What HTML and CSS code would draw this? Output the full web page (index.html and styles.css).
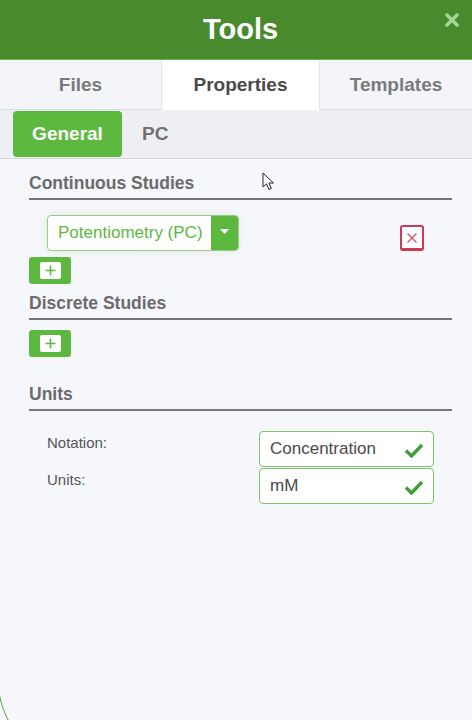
FILE: index.html
```html
<!DOCTYPE html>
<html>
<head>
<meta charset="utf-8">
<link rel="stylesheet" href="styles.css">
</head>
<body>
<div class="panel">
  <header class="hdr">
    <h1 class="title">Tools</h1>
    <span class="close" aria-label="close">
      <svg width="14" height="14" viewBox="0 0 14 14"><path d="M2 2L12 12M12 2L2 12" stroke="#a6d697" stroke-width="3.4" stroke-linecap="round"/></svg>
    </span>
  </header>
  <nav class="tabs">
    <div class="tab">Files</div>
    <div class="tab active">Properties</div>
    <div class="tab">Templates</div>
  </nav>
  <div class="subtabs">
    <div class="subtab on">General</div>
    <div class="subtab">PC</div>
  </div>
  <main class="content">
    <h2 class="sec">Continuous Studies</h2>
    <div class="studyrow">
      <div class="dropdown">
        <span class="dd-text">Potentiometry (PC)</span>
        <span class="dd-btn"><svg width="9" height="5" viewBox="0 0 9 5"><path d="M0 0H9L4.5 5Z" fill="#fff"/></svg></span>
      </div>
      <span class="del"><svg width="12" height="12" viewBox="0 0 12 12"><path d="M1.5 1.5L10.5 10.5M10.5 1.5L1.5 10.5" stroke="#d8485f" stroke-width="1.3"/></svg></span>
    </div>
    <div class="add"><span class="add-in"><svg width="11" height="11" viewBox="0 0 11 11"><path d="M5.5 0.5V10.5M0.5 5.5H10.5" stroke="#5cb83f" stroke-width="1.6"/></svg></span></div>

    <h2 class="sec sec2">Discrete Studies</h2>
    <div class="add add2"><span class="add-in"><svg width="11" height="11" viewBox="0 0 11 11"><path d="M5.5 0.5V10.5M0.5 5.5H10.5" stroke="#5cb83f" stroke-width="1.6"/></svg></span></div>

    <h2 class="sec sec3">Units</h2>
    <div class="form">
      <label class="lbl">Notation:</label>
      <div class="field"><span>Concentration</span><svg class="chk" width="20" height="16" viewBox="0 0 20 16"><path d="M2 8.5L7.5 14L18 3" fill="none" stroke="#3f9f3a" stroke-width="3.4"/></svg></div>
      <label class="lbl">Units:</label>
      <div class="field"><span>mM</span><svg class="chk" width="20" height="16" viewBox="0 0 20 16"><path d="M2 8.5L7.5 14L18 3" fill="none" stroke="#3f9f3a" stroke-width="3.4"/></svg></div>
    </div>
  </main>
  <svg class="cursor" width="14" height="20" viewBox="0 0 14 20"><path d="M1 1V15L4.5 11.8L7 17.5L9.3 16.5L6.9 11H11.5Z" fill="#fff" stroke="#222" stroke-width="1" stroke-linejoin="round"/></svg>
</div>
</body>
</html>
```
FILE: styles.css
```css
html, body {
  margin: 0;
  padding: 0;
  overflow: hidden;
  background: #f6f7fa;
}
body {
  font-family: "Liberation Sans", Arial, sans-serif;
  width: 472px;
  height: 720px;
}
.panel {
  position: relative;
  width: 472px;
  height: 720px;
  background: #f6f7fa;
  overflow: hidden;
}
.panel::after {
  content: "";
  position: absolute;
  left: -2px;
  bottom: -42px;
  width: 200px;
  height: 200px;
  border-left: 1px solid #5aa83f;
  border-bottom: 1px solid #5aa83f;
  border-bottom-left-radius: 80px;
  pointer-events: none;
}
.hdr {
  height: 59px;
  background: #498a2e;
  border-bottom: 1px solid #6fb554;
  display: flex;
  align-items: center;
  justify-content: center;
  position: relative;
  padding-left: 9px;
}
.title {
  margin: 0;
  color: #fff;
  font-size: 29px;
  font-weight: bold;
  line-height: 1;
}
.close {
  position: absolute;
  right: 13px;
  top: 13px;
  width: 14px;
  height: 14px;
  display: flex;
}
.tabs {
  display: grid;
  grid-template-columns: 161px 159px 1fr;
  height: 49px;
  background: #f4f5f8;
  border-bottom: 1px solid #dcdde0;
}
.tab {
  display: flex;
  align-items: center;
  justify-content: center;
  font-size: 19px;
  font-weight: bold;
  color: #7a7a7c;
}
.tab.active {
  background: #fff;
  color: #4a4a4a;
  border-left: 1px solid #e2e3e6;
  border-right: 1px solid #e2e3e6;
  margin-bottom: -1px;
}
.subtabs {
  height: 48px;
  background: #eeeff2;
  border-bottom: 1px solid #d5d6d9;
  display: flex;
  align-items: center;
  padding-left: 13px;
}
.subtab {
  font-size: 19px;
  font-weight: bold;
  color: #707072;
  padding: 0 0 0 20px;
}
.subtab.on {
  background: #5cb83f;
  color: #fff;
  width: 109px;
  height: 46px;
  box-sizing: border-box;
  border-radius: 4px;
  display: flex;
  align-items: center;
  justify-content: center;
  padding: 0;
}
.content {
  padding: 0 20px 0 29px;
}
.sec {
  margin: 12px 0 0;
  font-size: 17.5px;
  line-height: 24px;
  font-weight: bold;
  color: #6b6b6d;
  padding-bottom: 3px;
  border-bottom: 2px solid #77777a;
}
.sec2 { margin-top: 7px; }
.sec3 { margin-top: 25px; }
.studyrow {
  display: flex;
  justify-content: space-between;
  align-items: flex-end;
  margin-top: 15px;
  padding-left: 18px;
  padding-right: 28px;
}
.dropdown {
  display: flex;
  width: 192px;
  height: 36px;
  box-sizing: border-box;
  border: 1px solid #93d07d;
  border-radius: 4px;
  background: #fff;
  overflow: hidden;
  box-shadow: 0 0 10px rgba(0,0,0,0.07);
}
.dd-text {
  flex: 1;
  display: flex;
  align-items: center;
  padding-left: 10px;
  font-size: 17px;
  color: #5cb83f;
}
.dd-btn {
  width: 27px;
  background: #5cb83f;
  display: flex;
  align-items: center;
  justify-content: center;
  padding-bottom: 4px;
  box-sizing: border-box;
}
.del {
  width: 24px;
  height: 26px;
  box-sizing: border-box;
  border: 2px solid #cf3853;
  border-bottom-width: 3px;
  border-radius: 3px;
  background: #fff;
  display: flex;
  align-items: center;
  justify-content: center;
}
.add {
  margin-top: 6px;
  width: 42px;
  height: 27px;
  background: #5cb83f;
  border-radius: 3px;
  display: flex;
  align-items: center;
  justify-content: center;
}
.add2 { margin-top: 10px; }
.add-in {
  width: 21px;
  height: 17px;
  background: #fff;
  border-radius: 2px;
  display: flex;
  align-items: center;
  justify-content: center;
}
.form {
  margin-top: 20px;
  padding-left: 18px;
  display: grid;
  grid-template-columns: 212px 175px;
  grid-auto-rows: 37px;
}
.lbl {
  font-size: 15px;
  color: #555557;
  padding-top: 3px;
}
.field {
  height: 36px;
  box-sizing: border-box;
  border: 1px solid #7cc466;
  border-radius: 4px;
  background: #fff;
  display: flex;
  align-items: center;
  justify-content: space-between;
  padding: 0 9px 0 10px;
  font-size: 17px;
  color: #4a4a4c;
}
.chk { margin-top: 1px; }
.cursor {
  position: absolute;
  left: 262px;
  top: 172px;
}
```
